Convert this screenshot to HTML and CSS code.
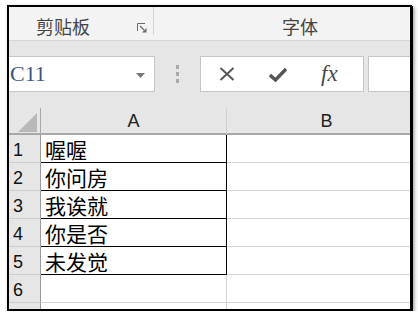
FILE: index.html
```html
<!DOCTYPE html>
<html lang="zh-CN">
<head>
    <meta charset="UTF-8">
    <title>剪贴板 - 字体</title>
    <link rel="stylesheet" href="styles.css">
</head>
<body>
    <div class="window">
        <!-- 功能区分组标签 -->
        <div class="ribbon">
            <div class="group clipboard">
                <span class="group-label">剪贴板</span>
                <svg class="launcher" width="10" height="10" viewBox="0 0 10 10">
                    <path d="M0.5 8V0.5H8" fill="none" stroke="#6a6a6a" stroke-width="1"/>
                    <path d="M3 3L7 7" stroke="#6a6a6a" stroke-width="1.2"/>
                    <path d="M9.5 5V9.5H5Z" fill="#6a6a6a"/>
                </svg>
            </div>
            <div class="group font">
                <span class="group-label">字体</span>
            </div>
        </div>

        <!-- 编辑栏 -->
        <div class="formula-bar">
            <div class="name-box">
                <span class="cell-ref">C11</span>
                <svg class="drop" width="9" height="5" viewBox="0 0 9 5">
                    <path d="M0 0H9L4.5 5Z" fill="#777"/>
                </svg>
            </div>
            <div class="grip">
                <span></span><span></span><span></span>
            </div>
            <div class="fx-buttons">
                <span class="fx-btn">
                    <svg width="16" height="14" viewBox="0 0 16 14">
                        <path d="M1.5 1L14.5 13M14.5 1L1.5 13" stroke="#555" stroke-width="2"/>
                    </svg>
                </span>
                <span class="fx-btn">
                    <svg width="18" height="15" viewBox="0 0 18 15">
                        <path d="M1 8L6.5 13L17 2" fill="none" stroke="#555" stroke-width="3.4"/>
                    </svg>
                </span>
                <span class="fx-btn fx-label"><i>fx</i></span>
            </div>
            <div class="formula-input"></div>
        </div>

        <!-- 表格 -->
        <table class="sheet">
            <colgroup>
                <col class="col-head">
                <col class="col-a">
                <col class="col-b">
            </colgroup>
            <thead>
                <tr>
                    <th class="corner">
                        <svg width="19" height="19" viewBox="0 0 19 19">
                            <path d="M19 0V19H0Z" fill="#b9b9b9"/>
                        </svg>
                    </th>
                    <th>A</th>
                    <th>B</th>
                </tr>
            </thead>
            <tbody>
                <tr><td class="row-head">1</td><td class="boxed">喔喔</td><td></td></tr>
                <tr><td class="row-head">2</td><td class="boxed">你问房</td><td></td></tr>
                <tr><td class="row-head">3</td><td class="boxed">我诶就</td><td></td></tr>
                <tr><td class="row-head">4</td><td class="boxed">你是否</td><td></td></tr>
                <tr><td class="row-head">5</td><td class="boxed">未发觉</td><td></td></tr>
                <tr><td class="row-head">6</td><td></td><td></td></tr>
                <tr><td class="row-head"></td><td></td><td></td></tr>
            </tbody>
        </table>
    </div>
</body>
</html>
```

FILE: styles.css
```css
* {
    box-sizing: border-box;
    margin: 0;
    padding: 0;
}

body {
    background: #fff;
    font-family: "Liberation Sans", "Noto Sans CJK SC", sans-serif;
}

.window {
    width: 405px;
    height: 306px;
    margin: 5px 0 0 7px;
    border: 2px solid #000;
    box-shadow: 1px 1px 0 #000, 2px 2px 4px rgba(0,0,0,0.45);
    overflow: hidden;
    background: #fff;
}

/* 功能区 */
.ribbon {
    display: flex;
    height: 34px;
    background: #f3f3f3;
    border-bottom: 1px solid #d6d6d6;
}

.group {
    display: flex;
    align-items: flex-end;
    padding-bottom: 3px;
    flex-shrink: 0;
}

.group-label {
    font-family: "Noto Sans CJK SC", sans-serif;
    font-size: 18px;
    line-height: 22px;
    color: #444;
}

.clipboard {
    width: 145px;
    padding-left: 27px;
    position: relative;
}

.clipboard::after {
    content: "";
    position: absolute;
    right: 0;
    top: 0;
    height: 28px;
    border-right: 1px solid #d4d4d4;
}

.launcher {
    margin: 0 0 4px 47px;
}

.font {
    padding-left: 128px;
    width: 300px;
}

/* 编辑栏 */
.formula-bar {
    display: flex;
    align-items: center;
    height: 67px;
    padding: 15px 0 16px;
    background: #e6e6e6;
}

.name-box {
    display: flex;
    align-items: center;
    width: 146px;
    height: 36px;
    background: #fff;
    border: 1px solid #c6c6c6;
    border-left: none;
    flex-shrink: 0;
}

.cell-ref {
    font-family: "Liberation Serif", serif;
    font-size: 22px;
    color: #3e5585;
    padding-left: 1px;
    flex: 1;
}

.drop {
    margin: 2px 9px 0 0;
}

.grip {
    display: flex;
    flex-direction: column;
    align-items: center;
    gap: 3px;
    width: 45px;
    flex-shrink: 0;
}

.grip span {
    display: block;
    width: 3px;
    height: 4px;
    background: #a9a9a9;
}

.fx-buttons {
    display: flex;
    width: 164px;
    height: 36px;
    background: #fff;
    border: 1px solid #c6c6c6;
    flex-shrink: 0;
}

.fx-btn {
    flex: 1;
    display: flex;
    align-items: center;
    justify-content: center;
}

.fx-label {
    font-family: "Liberation Serif", serif;
    font-size: 23px;
    color: #4a4a4a;
    padding-right: 8px;
}

.formula-input {
    width: 80px;
    height: 36px;
    margin-left: 4px;
    background: #fff;
    border: 1px solid #c6c6c6;
    flex-shrink: 0;
}

/* 表格 */
.sheet {
    border-collapse: separate;
    border-spacing: 0;
    table-layout: fixed;
    width: 418px;
}

.col-head { width: 32px; }
.col-a { width: 186px; }
.col-b { width: 200px; }

.sheet th {
    height: 27px;
    background: #e6e6e6;
    border-bottom: 2px solid #a8a8a8;
    border-right: 1px solid #d0d0d0;
    font-weight: normal;
    font-size: 18px;
    color: #222;
    padding-top: 1px;
}

.sheet th.corner {
    text-align: right;
    vertical-align: bottom;
    padding: 0 3px 1px 0;
    border-right: 1px solid #a8a8a8;
}

.corner svg {
    display: block;
    margin-left: auto;
}

.sheet td {
    height: 28px;
    border-bottom: 1px solid #d4d4d4;
    border-right: 1px solid #d4d4d4;
    vertical-align: bottom;
    font-family: "Noto Sans CJK SC", sans-serif;
    font-size: 21px;
    line-height: 24px;
    padding: 0 0 1px 4px;
    color: #000;
}

.sheet td.row-head {
    background: #e6e6e6;
    border-right: 1px solid #9a9a9a;
    border-bottom: 1px solid #cdcdcd;
    font-family: "Liberation Sans", sans-serif;
    font-size: 18px;
    line-height: 20px;
    padding: 0 0 2px 4px;
    color: #111;
}

.sheet td.boxed {
    border-bottom: 1px solid #000;
    border-right: 1px solid #000;
}
```
